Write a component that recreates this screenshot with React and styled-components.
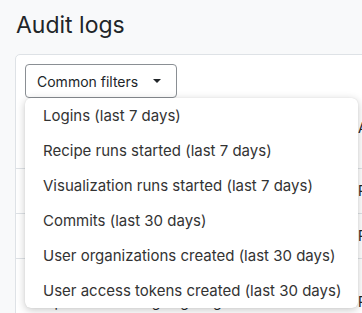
import React from "react";
import styled, { createGlobalStyle } from "styled-components";

const Global = createGlobalStyle`
  html, body { margin: 0; padding: 0; background: #f8f9fa; overflow: hidden; }
  body { font-family: Inter, "Liberation Sans", Arial, sans-serif; color: #212529; }
`;

const Page = styled.div`
  padding: 10px 0 0 15px;
  width: 700px;
`;

const Title = styled.h1`
  margin: 0 0 14px 1px;
  font-size: 23px;
  font-weight: 400;
  line-height: 30px;
  color: #212529;
`;

const Card = styled.div`
  background: #fff;
  border: 1px solid #dee2e6;
  border-radius: 5px;
  width: 620px;
  height: 400px;
`;

const Toolbar = styled.div`
  position: relative;
  padding: 9px 9px 10px;
`;

const FilterButton = styled.button`
  display: inline-flex;
  align-items: center;
  gap: 15px;
  height: 34px;
  padding: 0 15px 0 11px;
  background: #fff;
  border: 1px solid #8a8f94;
  border-radius: 4px;
  font-family: inherit;
  font-size: 14px;
  color: #212529;
`;

const Caret = styled.span`
  width: 0;
  height: 0;
  border-left: 4px solid transparent;
  border-right: 4px solid transparent;
  border-top: 4px solid #212529;
`;

const Menu = styled.ul`
  position: absolute;
  left: 9px;
  top: 43px;
  width: 333px;
  margin: 0;
  padding: 0;
  list-style: none;
  background: #fff;
  border-radius: 6px;
  box-shadow: 0 2px 8px rgba(0, 0, 0, 0.22), 0 0 1px rgba(0, 0, 0, 0.15);
  z-index: 2;
`;

const MenuItem = styled.li`
  height: 35px;
  display: flex;
  align-items: center;
  padding-left: 18px;
  font-size: 15px;
  color: #333;
  white-space: nowrap;
`;

const Table = styled.div`
  display: flex;
  flex-direction: column;
`;

const Row = styled.div`
  display: grid;
  grid-template-columns: 342px 1fr;
  height: ${(p) => p.$h}px;
  border-bottom: ${(p) => (p.$line ? "1px solid #dee2e6" : "none")};
  align-items: ${(p) => (p.$top ? "start" : "center")};
  font-size: 14px;
`;

const Cell = styled.div`
  padding: ${(p) => (p.$top ? "10px" : "0")} 0 0 ${(p) => (p.$first ? "14px" : "0")};
  line-height: 20px;
  white-space: nowrap;
  overflow: hidden;
`;

const items = [
  "Logins (last 7 days)",
  "Recipe runs started (last 7 days)",
  "Visualization runs started (last 7 days)",
  "Commits (last 30 days)",
  "User organizations created (last 30 days)",
  "User access tokens created (last 30 days)",
];

const rows = [
  { h: 60, top: true, a: "Event", b: "Actor" },
  { h: 44, a: "user.login", b: "Parker" },
  { h: 44, a: "user.login", b: "Parker" },
  { h: 86, a: "recipe.run.started going long", b: "Parker" },
];

export default function App() {
  return (
    <>
      <Global />
      <Page>
        <Title>Audit logs</Title>
        <Card>
          <Toolbar>
            <FilterButton>
              Common filters
              <Caret />
            </FilterButton>
            <Menu>
              {items.map((t) => (
                <MenuItem key={t}>{t}</MenuItem>
              ))}
            </Menu>
          </Toolbar>
          <Table>
            {rows.map((r, i) => (
              <Row key={i} $h={r.h} $top={r.top} $line={i < rows.length - 1}>
                <Cell $first $top={r.top}>{r.a}</Cell>
                <Cell $top={r.top}>{r.b}</Cell>
              </Row>
            ))}
          </Table>
        </Card>
      </Page>
    </>
  );
}
